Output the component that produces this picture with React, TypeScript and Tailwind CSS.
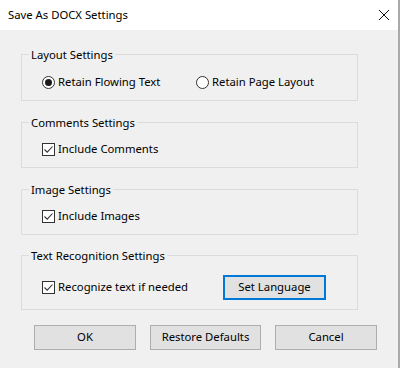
import type { ReactNode } from 'react'

const font = { fontFamily: '"Noto Sans", "Open Sans", sans-serif' }

function Radio({ checked }: { checked?: boolean }) {
  return (
    <span className="flex h-[13px] w-[13px] shrink-0 items-center justify-center rounded-full border border-[#333] bg-white">
      {checked && <span className="h-[7px] w-[7px] rounded-full bg-[#1a1a1a]" />}
    </span>
  )
}

function Check() {
  return (
    <span className="flex h-[13px] w-[13px] shrink-0 items-center justify-center border border-[#333] bg-white">
      <svg width="11" height="11" viewBox="0 0 11 11" fill="none">
        <path d="M1.5 5.5 L4.2 8.2 L9.5 2.5" stroke="#333" strokeWidth="1.1" />
      </svg>
    </span>
  )
}

function Group({ label, h, pt, children }: { label: string; h: string; pt: string; children: ReactNode }) {
  return (
    <fieldset className={`m-0 border border-[#dcdcdc] px-0 pb-0 ${h} ${pt}`}>
      <legend className="ml-[7px] px-[2px] leading-[15px]">{label}</legend>
      <div className="pl-[20px]">{children}</div>
    </fieldset>
  )
}

function Button({ children, w }: { children: ReactNode; w: string }) {
  return (
    <button className={`h-[25px] ${w} border border-[#adadad] bg-[#e1e1e1] text-black`}>
      {children}
    </button>
  )
}

export default function App() {
  return (
    <div className="flex h-[368px] w-[400px] flex-col border-r-2 border-[#a9a9a9] bg-[#f0f0f0] text-[11.3px] text-black" style={font}>
      <div className="flex h-[30px] items-center justify-between bg-white pl-[8px] pr-[8px]">
        <span>Save As DOCX Settings</span>
        <svg width="12" height="12" viewBox="0 0 12 12">
          <path d="M1 1 L11 11 M11 1 L1 11" stroke="#111" strokeWidth="1" />
        </svg>
      </div>

      <div className="flex w-[358px] flex-col pl-[21px] pt-[17px]">
        <Group label="Layout Settings" h="h-[54px]" pt="pt-[12px]">
          <div className="flex h-[16px] items-center">
            <label className="flex w-[154px] items-center gap-[3px]">
              <Radio checked />
              <span>Retain Flowing Text</span>
            </label>
            <label className="flex items-center gap-[3px]">
              <Radio />
              <span>Retain Page Layout</span>
            </label>
          </div>
        </Group>

        <div className="mt-[14px]">
          <Group label="Comments Settings" h="h-[53px]" pt="pt-[11px]">
            <label className="flex h-[16px] items-center gap-[3px]">
              <Check />
              <span>Include Comments</span>
            </label>
          </Group>
        </div>

        <div className="mt-[14px]">
          <Group label="Image Settings" h="h-[53px]" pt="pt-[11px]">
            <label className="flex h-[16px] items-center gap-[3px]">
              <Check />
              <span>Include Images</span>
            </label>
          </Group>
        </div>

        <div className="mt-[13px]">
          <Group label="Text Recognition Settings" h="h-[62px]" pt="pt-[12px]">
            <div className="flex h-[25px] items-center">
              <label className="flex w-[181px] items-center gap-[3px]">
                <Check />
                <span>Recognize text if needed</span>
              </label>
              <button className="h-[25px] w-[103px] border-2 border-[#0078d7] bg-[#e1e1e1]">
                Set Language
              </button>
            </div>
          </Group>
        </div>
      </div>

      <div className="mt-[15px] flex gap-[14px] pl-[34px]">
        <Button w="w-[102px]">OK</Button>
        <Button w="w-[111px]">Restore Defaults</Button>
        <Button w="w-[102px]">Cancel</Button>
      </div>
    </div>
  )
}
